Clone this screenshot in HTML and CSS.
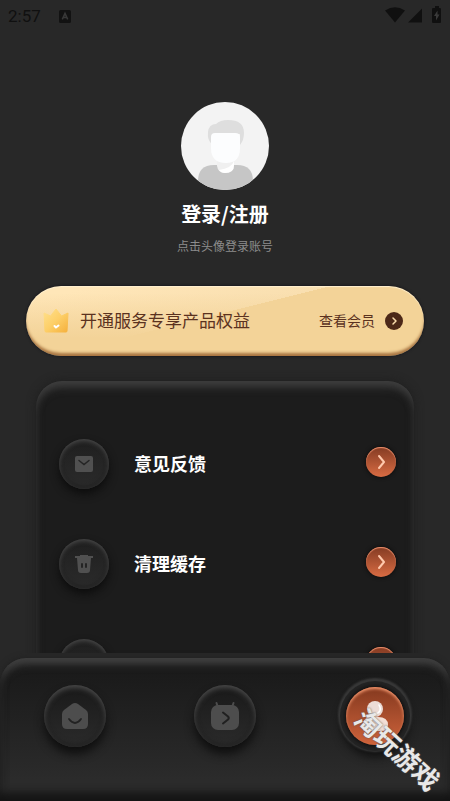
FILE: index.html
```html
<!DOCTYPE html>
<html lang="zh-CN">
<head>
<meta charset="utf-8">
<meta name="viewport" content="width=device-width, initial-scale=1">
<title>登录/注册</title>
<link rel="stylesheet" href="styles.css">
</head>
<body>
<header class="status">
  <time class="clock">2:57</time>
  <svg class="status-app" width="12" height="13" viewBox="0 0 12 13"><rect width="12" height="13" rx="1.5" fill="#121212"/><path d="M3.3 9.4 6 3.4l2.7 6M4.3 7.4h3.4" fill="none" stroke="#383838" stroke-width="1.5"/></svg>
  <svg class="status-icons" width="58" height="18" viewBox="0 0 58 18" fill="#101010">
    <path d="M1 3.500Q11 -3 21 3.500L11 15.500Z"/>
    <path d="M38 1.500V15.500H24Z"/>
    <path d="M49 1h2V-1H55v2h1q1 0 1 1v13q0 1-1 1h-7q-1 0-1-1V2q0-1 1-1Z"/>
    <path d="M53.500 3.500 50 9H52V13.500L55.500 7.500H53.500Z" fill="#3a3a3a"/>
  </svg>
</header>

<main class="content">
  <section class="profile">
    <button class="avatar" type="button" aria-labelledby="login">
      <svg width="88" height="88" viewBox="0 0 88 88">
        <circle cx="44" cy="44" r="44" fill="#f3f3f3"/>
        <clipPath id="disc"><circle cx="44" cy="44" r="44"/></clipPath>
        <path clip-path="url(#disc)" d="M17 88V79Q17 63 33 63H56Q72 63 72 79V88Z" fill="#c6c6c6"/>
        <path d="M36 56H53V63Q53 71 44 71Q37 71 36 64Z" fill="#f0f0f0"/>
        <path d="M53 59V63Q53 71 44 71Q40 71 38 68Q51 66 53 59Z" fill="#fff"/>
        <path d="M31 42Q26 38 27 30Q28 22 35 22Q39 18 47 18Q63 18 63 31Q63 38 59 43V32H31Z" fill="#dedede"/>
        <path d="M30 35Q30 31 34 31H54Q59 31 59 35V46Q59 61 45 61Q30 61 30 46Z" fill="#fcfdfe"/>
      </svg>
    </button>
    <h1 class="title" id="login">登录/注册</h1>
    <p class="hint">点击头像登录账号</p>
  </section>

  <button class="vip" type="button">
    <svg width="26" height="26" viewBox="0 0 26 26">
      <defs><linearGradient id="gold" x1="0" y1="0" x2="1" y2="1"><stop offset="0" stop-color="#ffe08c"/><stop offset=".5" stop-color="#fdcf68"/><stop offset="1" stop-color="#f5b03c"/></linearGradient></defs>
      <path d="M1 5 7.500 8 13 1 18.500 8 25 5 24 23Q24 24 23 24H3Q2 24 2 23Z" fill="url(#gold)" stroke="url(#gold)" stroke-linejoin="round"/>
      <path d="M11.500 18 13 19.500 15.500 17.500" fill="none" stroke="#fff" stroke-width="2" stroke-linecap="round"/>
    </svg>
    <span class="vip-text">开通服务专享产品权益</span>
    <span class="vip-more">查看会员</span>
    <svg width="18" height="18" viewBox="0 0 18 18"><circle cx="9" cy="9" r="9" fill="#4c2818"/><path d="M8 6 11 9 8 12" fill="none" stroke="#f9dcad" stroke-width="1.500" stroke-linecap="round" stroke-linejoin="round"/></svg>
  </button>

  <ul class="panel">
    <li>
      <button class="row" type="button">
        <span class="knob"><svg width="18" height="16" viewBox="0 0 18 16"><rect width="18" height="16" rx="2" fill="#505050"/><path d="M4 4.500 9 8.500 14 4.500" fill="none" stroke="#242424" stroke-width="1.500" stroke-linecap="round"/></svg></span>
        <span class="label">意见反馈</span>
        <span class="go"><svg width="10" height="14" viewBox="0 0 10 14"><path d="M3 1 8 7 3 13"/></svg></span>
      </button>
    </li>
    <li>
      <button class="row" type="button">
        <span class="knob"><svg width="20" height="18" viewBox="0 0 20 18"><path d="M1 1H6V0H14V1H19V3H17L16 15Q16 18 13 18H7Q4 18 4 15L3 3H1Z" fill="#505050"/><path d="M8 9V12M12 9V12" stroke="#242424" stroke-width="2" stroke-linecap="round"/></svg></span>
        <span class="label">清理缓存</span>
        <span class="go"><svg width="10" height="14" viewBox="0 0 10 14"><path d="M3 1 8 7 3 13"/></svg></span>
      </button>
    </li>
    <li>
      <div class="row">
        <span class="knob"></span>
        <span class="label"></span>
        <span class="go"></span>
      </div>
    </li>
  </ul>
</main>

<nav class="tabs">
  <button class="tab" type="button">
    <svg width="26" height="28" viewBox="0 0 26 28"><path d="M10 2Q13 0 16 2L24 8Q26 9.500 26 12V22Q26 27 21 27H5Q0 27 0 22V12Q0 9.500 2 8Z" fill="#4d4d4d"/><path d="M7 17Q13 25 19 17" fill="none" stroke="#222" stroke-width="1.800" stroke-linecap="round"/></svg>
  </button>
  <button class="tab" type="button">
    <svg width="28" height="28" viewBox="0 0 28 28"><path d="M5.500 1 6.500 4M22.500 1 21.500 4" stroke="#4d4d4d" stroke-width="2" stroke-linecap="round"/><rect y="3" width="28" height="25" rx="7" fill="#4d4d4d"/><path d="M12 10.500 17 14.500Q18.500 16 17 17.500L12 21.500" fill="none" stroke="#202020" stroke-width="2" stroke-linecap="round"/></svg>
  </button>
  <button class="tab active" type="button">
    <svg width="32" height="32" viewBox="0 0 32 32"><path d="M4 29Q3 17 12 17H19Q29 17 29 25Q29 31 22 31H6Q4 31 4 29Z" fill="#f3dfd6"/><circle cx="16" cy="9" r="8" fill="#ecdcd6"/><path d="M20 5Q24 12 16 14" fill="none" stroke="#fff" stroke-width="1.500" stroke-linecap="round"/></svg>
  </button>
</nav>
<div class="mark">淘玩游戏</div>
</body>
</html>
```

FILE: styles.css
```css
* {
  box-sizing: border-box;
}

body {
  margin: 0;
  height: 100vh;
  display: flex;
  flex-direction: column;
  position: relative;
  overflow: hidden;
  background: #282828;
  color: #fff;
  font-family: Roboto, "Noto Sans CJK SC", sans-serif;
}

button {
  border: 0;
  padding: 0;
  background: none;
  color: inherit;
  font: inherit;
  cursor: pointer;
}

svg {
  display: block;
  flex: none;
  overflow: visible;
}

.status {
  flex: none;
  height: 32px;
  padding: 0 8px;
  display: flex;
  align-items: center;
  color: #101010;
}

.clock {
  font-size: 17px;
  line-height: 32px;
}

.status-app {
  margin-left: 18px;
}

.status-icons {
  margin-left: auto;
}

.content {
  flex: 1;
  min-height: 0;
  overflow: hidden;
  display: flex;
  flex-direction: column;
}

.profile {
  flex: none;
  padding-top: 70px;
  display: flex;
  flex-direction: column;
  align-items: center;
}

.avatar {
  border-radius: 50%;
}

.title {
  margin: 10px 0 0;
  font-size: 20px;
  line-height: 28px;
  font-weight: 700;
  font-family: "Noto Sans CJK SC", sans-serif;
}

.hint {
  margin: 8px 0 0;
  color: #8c8c8c;
  font-size: 12px;
  line-height: 22px;
}

.vip {
  flex: none;
  height: 70px;
  margin: 28px 26px 0;
  padding: 0 21px 0 17px;
  display: flex;
  align-items: center;
  border-radius: 35px;
  background:
    linear-gradient(180deg, transparent 10%, #f3d398 75%),
    linear-gradient(166deg, #ffe6b8 10%, #f9dfb0 45%, #f3d398 45%);
  box-shadow: inset 0 -4px 3px -1px #a87542, inset 0 1px 1px #fff0d0, 0 0 3px #101018;
  color: #5b321f;
}

.vip-text {
  margin-left: 11px;
  font-size: 17px;
  line-height: 24px;
}

.vip-more {
  margin: 0 10px 0 auto;
  font-size: 14px;
  line-height: 20px;
}

.panel {
  flex: none;
  margin: 25px 36px 0;
  padding: 33px 18px 0 23px;
  list-style: none;
  border-radius: 26px 26px 0 0;
  background: #1c1c1c;
  box-shadow: inset 0 9px 8px -3px #3e3e3e, inset 0 0 8px #2b2b2b, 0 0 10px #1e1e1e;
}

.row {
  width: 100%;
  height: 100px;
  display: flex;
  align-items: center;
}

.knob {
  width: 50px;
  height: 50px;
  display: grid;
  place-items: center;
  border-radius: 50%;
  background: linear-gradient(#1f1f1f, #2b2b2b);
  box-shadow: inset 0 2px 4px #484848, inset 0 -3px 4px #222, 0 5px 9px #0d0d0d;
}

.label {
  margin-left: 25px;
  padding-bottom: 2px;
  font-size: 18px;
  line-height: 26px;
  font-weight: 700;
  font-family: "Noto Sans CJK SC", sans-serif;
}

.go {
  width: 30px;
  height: 30px;
  margin: 0 0 4px auto;
  display: grid;
  place-items: center;
  border-radius: 50%;
  background: linear-gradient(#843b23, #d96c43);
  box-shadow: inset 0 1px 1px #f09470, 0 0 4px #0b0807;
}

.go path {
  fill: none;
  stroke: #ffc9ad;
  stroke-width: 2;
  stroke-linecap: round;
  stroke-linejoin: round;
}

.tabs {
  flex: none;
  height: 143px;
  margin-top: 5px;
  padding-top: 20px;
  display: grid;
  grid-template-columns: repeat(3, 1fr);
  grid-template-rows: 76px;
  place-items: center;
  border-radius: 26px 26px 0 0;
  background: linear-gradient(#181818, #2b2b2b 85%);
  box-shadow: inset 0 -8px 8px #141414, inset 0 9px 8px -3px #424242, inset 0 0 8px #303030, 0 0 6px #202020;
}

.tab {
  width: 62px;
  height: 62px;
  display: grid;
  place-items: center;
  border-radius: 50%;
  background: linear-gradient(#191919, #2b2b2b);
  box-shadow: inset 0 3px 5px #484848, inset 0 -3px 5px #222, 0 7px 10px #0f0f0f;
}

.tab.active {
  width: 58px;
  height: 58px;
  background: linear-gradient(#84391f, #cf633b);
  box-shadow: inset 0 2px 3px #ef936b, 0 0 4px 1px #0d0b0b, 0 0 0 6px #242424, 0 -1px 2px 8px #383838, 0 7px 10px 5px #101010;
}

/* Diagonal mark laid over the bottom corner */
.mark {
  position: absolute;
  right: 0;
  bottom: 34px;
  color: #e8e8e8;
  font: 700 26px/36px "Noto Sans CJK SC", sans-serif;
  text-shadow: 0 0 2px #555;
  transform: rotate(43deg);
  pointer-events: none;
}
```
